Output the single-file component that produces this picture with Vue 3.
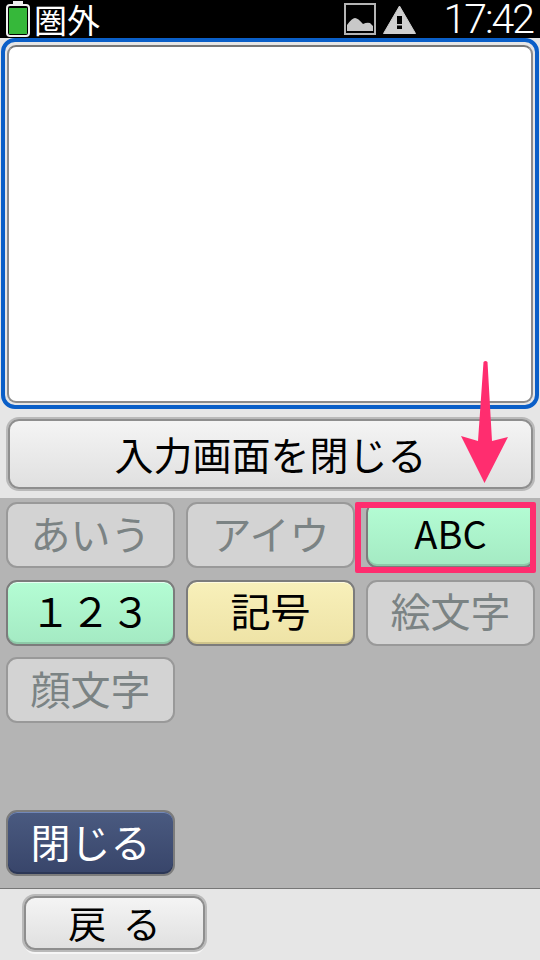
<template>
  <div class="screen">
    <header class="status">
      <div class="status-left">
        <svg class="battery" width="24" height="36" viewBox="0 0 24 36">
          <rect x="7" y="0" width="10" height="4" fill="#eee" />
          <rect x="1" y="4" width="22" height="31" rx="3" fill="#000" stroke="#f0f0f0" stroke-width="2" />
          <rect x="3" y="7" width="18" height="26" fill="#36b83a" />
        </svg>
        <span class="ken">圏外</span>
      </div>
      <div class="status-right">
        <svg class="pic" width="32" height="32" viewBox="0 0 32 32">
          <rect x="1" y="1" width="30" height="30" fill="none" stroke="#b4b4b4" stroke-width="2" />
          <path d="M3 28V22Q8 15 11 15T19 21Q23 19 26 20L29 23V28Z" fill="#c8c8c8" />
        </svg>
        <svg class="warn" width="33" height="29" viewBox="0 0 33 29">
          <path d="M16.5 1L32.5 28.5H.5Z" fill="#cfcfcf" stroke="#cfcfcf" stroke-linejoin="round" />
          <rect x="14" y="11" width="5" height="8" fill="#000" />
          <rect x="14" y="20.5" width="5" height="3.5" fill="#000" />
        </svg>
        <span class="time">17:42</span>
      </div>
    </header>

    <section class="input-area">
      <div class="editor-frame">
        <div class="editor"></div>
      </div>
      <button class="btn close-input">入力画面を閉じる</button>
    </section>

    <section class="panel">
      <div class="keys">
        <button
          v-for="k in keys"
          :key="k.label"
          class="key"
          :class="k.kind"
        >
          {{ k.label }}
        </button>
      </div>
      <button class="key dark">閉じる</button>

      <div class="highlight"></div>
    </section>

    <footer class="foot">
      <button class="btn back">戻 る</button>
    </footer>

    <svg class="arrow" width="52" height="126" viewBox="0 0 52 126">
      <path d="M24.5 1Q26.5 -1 28.5 1L33 80L49 76L25.5 122L2 75L19 80Z" fill="#ff2d6f" />
    </svg>
  </div>
</template>

<script setup>
const keys = [
  { label: 'あいう', kind: 'off' },
  { label: 'アイウ', kind: 'off' },
  { label: 'ABC', kind: 'green latin' },
  { label: '１２３', kind: 'green' },
  { label: '記号', kind: 'yellow' },
  { label: '絵文字', kind: 'off' },
  { label: '顔文字', kind: 'off' },
]
</script>

<style>
html,
body {
  margin: 0;
  background: #e6e6e6;
}
</style>

<style scoped>
.screen {
  position: relative;
  width: 540px;
  height: 960px;
  overflow: hidden;
  display: flex;
  flex-direction: column;
  background: #e6e6e6;
  font-family: "Noto Sans CJK JP", "Noto Sans", sans-serif;
}

.status {
  height: 38px;
  flex: none;
  background: #000;
  color: #fff;
  display: flex;
  justify-content: space-between;
  align-items: center;
  box-sizing: border-box;
  padding: 0 7px 0 6px;
}

.status-left,
.status-right {
  display: flex;
  align-items: center;
}

.ken {
  font-size: 33px;
  line-height: 36px;
  margin-left: 4px;
}

.pic {
  margin-right: 7px;
}

.warn {
  margin-right: 27px;
}

.time {
  font-size: 41px;
  line-height: 36px;
  font-family: Roboto, "Noto Sans", sans-serif;
  font-weight: 300;
  letter-spacing: -2px;
}

.input-area {
  height: 460px;
  flex: none;
  box-sizing: border-box;
  padding: 0 1px;
}

.editor-frame {
  height: 371px;
  box-sizing: border-box;
  border: 4px solid #0a5fc8;
  border-radius: 14px;
  padding: 3px 2px 2px;
}

.editor {
  height: 100%;
  box-sizing: border-box;
  background: #fff;
  border: 2px solid #8c8c8c;
  border-top-color: #777;
  border-radius: 9px;
}

.btn {
  display: block;
  font-family: inherit;
  color: #000;
  padding: 0 0 3px;
  box-sizing: border-box;
  background: linear-gradient(#f4f4f4, #e0e0e0);
  border: 2px solid #8e8e8e;
  border-radius: 11px;
  box-shadow: 0 0 0 2px #b9b9b9;
}

.close-input {
  width: 525px;
  height: 70px;
  margin: 10px 0 0 7px;
  font-size: 39px;
  line-height: 60px;
  text-align: center;
}

.panel {
  position: relative;
  height: 391px;
  flex: none;
  box-sizing: border-box;
  background: #b4b4b4;
  border-bottom: 1px solid #777;
  padding: 4px 5px 0 6px;
  display: flex;
  flex-direction: column;
  justify-content: flex-start;
}

.keys {
  display: grid;
  grid-template-columns: repeat(3, 169px);
  grid-auto-rows: 66px;
  column-gap: 11px;
  row-gap: 11.5px;
  height: 221px;
}

.key {
  font-family: inherit;
  font-size: 40px;
  line-height: 54px;
  padding: 0 0 5px;
  box-sizing: border-box;
  border-radius: 11px;
  border: 2px solid #7c7c7c;
  width: 169px;
  height: 66px;
  white-space: pre;
  color: #000;
}

.latin {
  font-size: 38px;
}

.off {
  background: #d3d3d3;
  border-color: #999;
  color: #7b8384;
}

.green {
  background: linear-gradient(#b4fdd4, #a4eac3);
  box-shadow: inset 0 1px 0 #e6fff2, inset 0 -2px 0 #8ec9a8;
}

.yellow {
  background: linear-gradient(#f8f0ba, #eee3a6);
  box-shadow: inset 0 1px 0 #fffbe0, inset 0 -2px 0 #cfc48c;
}

.dark {
  margin-top: 87px;
  color: #fff;
  background: linear-gradient(#4a5a80, #38456a);
  box-shadow: inset 0 1px 0 #7187b8, inset 0 -2px 0 #2c3756;
}

.highlight {
  position: absolute;
  left: 355px;
  top: 4px;
  width: 181px;
  height: 71px;
  box-sizing: border-box;
  border: 6px solid #ff2d6f;
  border-radius: 2px;
}

.foot {
  flex: 1;
  background: #e6e6e6;
  padding-top: 7px;
}

.back {
  width: 181px;
  height: 54px;
  margin-left: 24px;
  font-size: 38px;
  line-height: 48px;
  word-spacing: 8px;
  white-space: pre;
  box-shadow: 0 0 0 2px #b9b9b9, 0 4px 0 #f6f6f6;
}

.arrow {
  position: absolute;
  left: 459px;
  top: 361px;
}
</style>
